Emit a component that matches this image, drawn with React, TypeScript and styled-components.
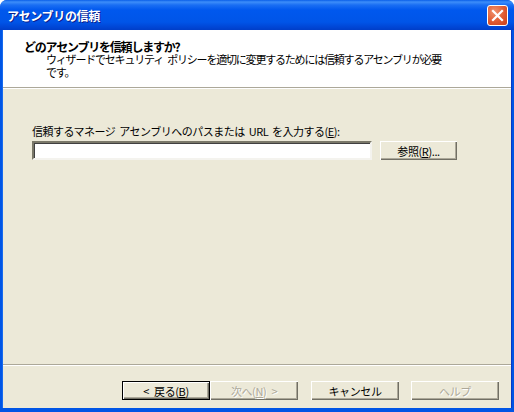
import React from "react";
import styled, { createGlobalStyle } from "styled-components";

const Global = createGlobalStyle`
  html, body { margin: 0; padding: 0; background: #ffffff; }
  body { font-family: "Noto Sans CJK JP", "Noto Sans", sans-serif; font-size: 12px; }
  * { box-sizing: border-box; }
`;

const Window = styled.div`
  width: 514px;
  height: 412px;
  display: flex;
  flex-direction: column;
  background: #0055e5;
  border-radius: 7px 7px 0 0;
  overflow: hidden;
`;

const TitleBar = styled.div`
  height: 30px;
  flex: none;
  display: flex;
  align-items: center;
  justify-content: space-between;
  padding: 0 6px 0 7px;
  background: linear-gradient(
    to bottom,
    #0a5fe8 0px,
    #3d8ef9 2px,
    #1a6ef3 5px,
    #0058ee 10px,
    #0055e8 22px,
    #0046d6 27px,
    #003ec8 30px
  );
`;

const TitleText = styled.span`
  color: #ffffff;
  font-weight: bold;
  font-size: 12px;
  letter-spacing: -0.3px;
  text-shadow: 1px 1px 0 #0a1e8c;
  font-family: "Noto Sans CJK JP", sans-serif;
`;

const CloseButton = styled.div`
  width: 21px;
  height: 21px;
  border: 1px solid #ffffff;
  border-radius: 3px;
  background: radial-gradient(circle at 35% 30%, #f0936f 0%, #e05a30 55%, #c9401b 100%);
  display: flex;
  align-items: center;
  justify-content: center;
  margin-top: 1px;
`;

const Frame = styled.div`
  flex: 1;
  display: flex;
  flex-direction: column;
  margin: 0 3px 4px 3px;
  background: #ece9d8;
  box-shadow: -1px 0 0 #166aee, 1px 0 0 #0838c4;
`;

const Header = styled.div`
  height: 57px;
  flex: none;
  background: #ffffff;
  padding: 10px 0 0 21px;
  display: flex;
  flex-direction: column;
`;

const HeaderTitle = styled.div`
  font-weight: bold;
  font-size: 12px;
  line-height: 13px;
  letter-spacing: -1.2px;
  color: #000000;
  font-family: "Noto Sans CJK JP", sans-serif;
`;

const HeaderText = styled.div`
  margin: 0 0 0 22px;
  font-size: 11px;
  line-height: 13px;
  letter-spacing: -1.2px;
  word-spacing: 3px;
  white-space: nowrap;
  color: #000000;
  font-family: "Noto Sans CJK JP", sans-serif;
`;

const Separator = styled.div`
  height: 2px;
  flex: none;
  border-top: 1px solid #aca899;
  border-bottom: 1px solid #ffffff;
`;

const Content = styled.div`
  flex: 1;
  padding: 35px 0 0 29px;
  display: flex;
  flex-direction: column;
`;

const Label = styled.div`
  font-size: 11px;
  line-height: 14px;
  letter-spacing: -0.5px;
  word-spacing: 2px;
  color: #000000;
  font-family: "Noto Sans CJK JP", sans-serif;
  margin-bottom: 3px;
`;

const InputRow = styled.div`
  display: flex;
  align-items: center;
  gap: 8px;
`;

const TextBox = styled.div`
  width: 340px;
  height: 19px;
  background: #ffffff;
  border-style: solid;
  border-width: 2px;
  border-color: #7a7869 #f4f3ee #f4f3ee #7a7869;
  box-shadow: inset 1px 1px 0 #404040;
`;

const Button = styled.div<{ $w?: number; $default?: boolean; $disabled?: boolean }>`
  width: ${(p) => p.$w ?? 88}px;
  height: 19px;
  display: flex;
  align-items: center;
  justify-content: center;
  background: #ece9d8;
  font-size: 11px;
  letter-spacing: -0.4px;
  word-spacing: 3px;
  font-family: "Noto Sans CJK JP", sans-serif;
  color: ${(p) => (p.$disabled ? "#aca899" : "#000000")};
  text-shadow: ${(p) => (p.$disabled ? "1px 1px 0 #ffffff" : "none")};
  border: ${(p) => (p.$default ? "1px solid #000000" : "none")};
  box-shadow: inset 1px 1px 0 #ffffff, inset -1px -1px 0 #716f64, inset -2px -2px 0 #aca899;
  white-space: pre;
`;

const U = styled.span`
  text-decoration: underline;
`;

const Footer = styled.div`
  height: 42px;
  flex: none;
  display: flex;
  align-items: flex-start;
  padding: 15px 0 0 119px;
`;

const Gap = styled.div<{ $w: number }>`
  width: ${(p) => p.$w}px;
  flex: none;
`;

export default function App() {
  return (
    <>
      <Global />
      <Window>
        <TitleBar>
          <TitleText>アセンブリの信頼</TitleText>
          <CloseButton>
            <svg width="13" height="13" viewBox="0 0 13 13">
              <path d="M2 2 L11 11 M11 2 L2 11" stroke="#ffffff" strokeWidth="2.2" strokeLinecap="square" />
            </svg>
          </CloseButton>
        </TitleBar>
        <Frame>
          <Header>
            <HeaderTitle>どのアセンブリを信頼しますか?</HeaderTitle>
            <HeaderText>
              ウィザードでセキュリティ ポリシーを適切に変更するためには信頼するアセンブリが必要
              <br />
              です。
            </HeaderText>
          </Header>
          <Separator />
          <Content>
            <Label>
              信頼するマネージ アセンブリへのパスまたは URL を入力する(<U>E</U>):
            </Label>
            <InputRow>
              <TextBox />
              <Button $w={77}>
                参照(<U>R</U>)...
              </Button>
            </InputRow>
          </Content>
          <Separator />
          <Footer>
            <Button $default>
              {"< 戻る("}<U>B</U>)
            </Button>
            <Button $disabled>
              次へ(<U>N</U>){" >"}
            </Button>
            <Gap $w={13} />
            <Button>キャンセル</Button>
            <Gap $w={12} />
            <Button $disabled>ヘルプ</Button>
          </Footer>
        </Frame>
      </Window>
    </>
  );
}
